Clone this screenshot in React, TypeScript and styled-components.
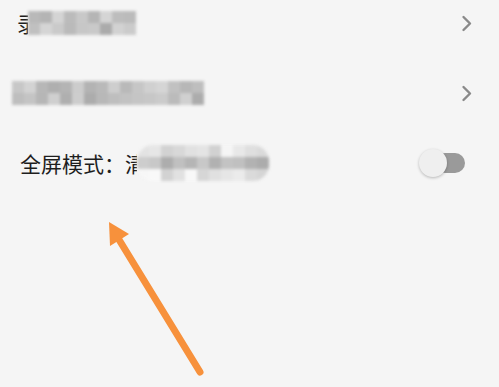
import React from "react";
import styled, { createGlobalStyle } from "styled-components";

const Global = createGlobalStyle`
  html, body {
    margin: 0;
    padding: 0;
    background: #f5f5f5;
    font-family: "Noto Sans CJK SC", "Noto Sans", sans-serif;
  }
`;

const Page = styled.div`
  position: relative;
  width: 499px;
  height: 387px;
  overflow: hidden;
  background: #f5f5f5;
`;

const List = styled.div`
  display: flex;
  flex-direction: column;
  margin-top: -12px;
`;

const Row = styled.div`
  height: 70px;
  display: flex;
  align-items: center;
  justify-content: space-between;
  padding: 0 26px 0 ${(p: { $indent: number }) => p.$indent}px;
`;

const Label = styled.div`
  display: flex;
  align-items: center;
  font-size: 21px;
  color: #1e1e1e;
  white-space: nowrap;
`;

const Glyph = styled.span`
  display: inline-block;
  overflow: hidden;
  width: ${(p: { $w: number }) => p.$w}px;
`;

const MosaicGrid = styled.div<{ $cols: number; $cell: number; $round: boolean }>`
  display: grid;
  grid-template-columns: repeat(${(p) => p.$cols}, ${(p) => p.$cell}px);
  grid-auto-rows: ${(p) => p.$cell}px;
  filter: blur(1.8px);
  border-radius: ${(p) => (p.$round ? "16px" : "0")};
  overflow: hidden;
`;

const Cell = styled.div``;

const Chevron = styled.svg`
  width: 12px;
  height: 17px;
`;

const Toggle = styled.div`
  position: relative;
  width: 46px;
  height: 29px;
  display: flex;
  align-items: center;
  margin-right: 8px;
`;

const Track = styled.div`
  margin-left: 16px;
  width: 30px;
  height: 20px;
  border-radius: 10px;
  background: #9a9a9a;
`;

const Knob = styled.div`
  position: absolute;
  left: 0;
  top: 0;
  width: 28px;
  height: 28px;
  border-radius: 50%;
  background: #efefef;
  box-shadow: 0 1px 3px rgba(0, 0, 0, 0.25);
`;

const Arrow = styled.svg`
  position: absolute;
  left: 0;
  top: 0;
`;

function rand(seed: number) {
  let s = seed;
  return () => {
    s = (s * 9301 + 49297) % 233280;
    return s / 233280;
  };
}

function Mosaic({ cols, rows, cell, seed, round = false }: { cols: number; rows: number; cell: number; seed: number; round?: boolean }) {
  const r = rand(seed);
  const cells = Array.from({ length: cols * rows }, (_, i) => {
    const row = Math.floor(i / cols);
    const base = rows === 3 && row !== 1 ? 205 : 170;
    const v = Math.round(base + r() * 45);
    return `rgb(${v},${v},${v})`;
  });
  return (
    <MosaicGrid $cols={cols} $cell={cell} $round={round}>
      {cells.map((c, i) => (
        <Cell key={i} style={{ background: c }} />
      ))}
    </MosaicGrid>
  );
}

function ChevronRight() {
  return (
    <Chevron viewBox="0 0 12 17">
      <path d="M2.5 2 L9 8.5 L2.5 15" fill="none" stroke="#8a8a8a" strokeWidth="2.4" strokeLinecap="round" strokeLinejoin="round" />
    </Chevron>
  );
}

export default function App() {
  return (
    <Page>
      <Global />
      <List>
        <Row $indent={17}>
          <Label>
            <Glyph $w={11}>录</Glyph>
            <Mosaic cols={9} rows={2} cell={12} seed={3} />
          </Label>
          <ChevronRight />
        </Row>
        <Row $indent={12}>
          <Label>
            <Mosaic cols={16} rows={2} cell={12} seed={11} />
          </Label>
          <ChevronRight />
        </Row>
        <Row $indent={20}>
          <Label>
            全屏模式：<Glyph $w={12}>清</Glyph>
            <Mosaic cols={11} rows={3} cell={12} seed={7} round />
          </Label>
          <Toggle>
            <Track />
            <Knob />
          </Toggle>
        </Row>
      </List>
      <Arrow width="499" height="387" viewBox="0 0 499 387">
        <line x1="200" y1="372" x2="118" y2="238" stroke="#f7913c" strokeWidth="7" strokeLinecap="round" />
        <polygon points="109,222 129,234 110,246" fill="#f7913c" />
      </Arrow>
    </Page>
  );
}
